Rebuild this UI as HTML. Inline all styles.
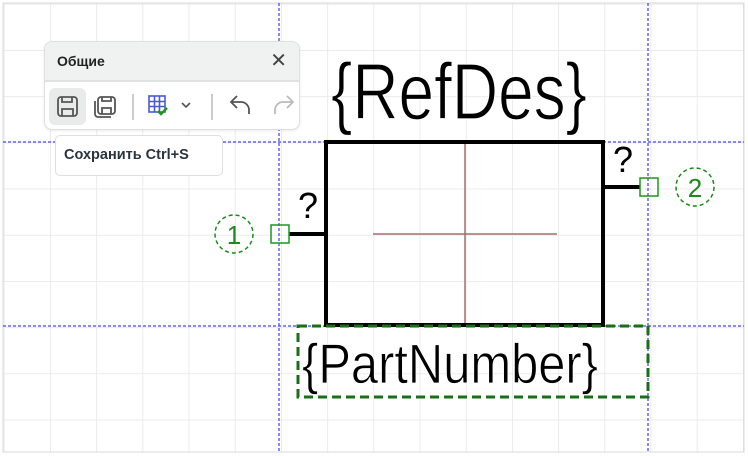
<!DOCTYPE html>
<html><head><meta charset="utf-8"><style>
html,body{margin:0;padding:0;width:748px;height:456px;overflow:hidden;background:#fff;font-family:"Liberation Sans",sans-serif}
.tb{position:absolute;left:44px;top:41px;width:254px;height:87px;border:1px solid #dde0df;border-radius:8px;background:#fff;box-shadow:0 1px 3px rgba(0,0,0,.08);overflow:hidden}
.hd{height:38px;background:#f0f2f1;border-bottom:2px solid #dfe3e2;font-weight:bold;font-size:14px;color:#222;line-height:38px;padding-left:12px;position:relative}
.tt{position:absolute;left:55px;top:135px;width:166px;height:39px;border:1px solid #dde0df;border-radius:5px;background:#fff;font-weight:bold;font-size:14.5px;color:#2a3340;line-height:39px;text-indent:8px}
</style></head><body>
<svg width="748" height="456" style="position:absolute;left:0;top:0">
<defs><pattern id="g" x="3.8" y="3.8" width="46.2" height="46.2" patternUnits="userSpaceOnUse"><path d="M0 0H46.2M0 0V46.2" stroke="#e6e6e6" stroke-width="1.5" fill="none"/></pattern></defs>
<rect x="3" y="3" width="741" height="449" fill="url(#g)" stroke="#d8d8d8"/>
<g stroke="#6060ff" stroke-width="1.5" stroke-dasharray="3 2">
<line x1="279" y1="3" x2="279" y2="452"/><line x1="648" y1="3" x2="648" y2="452"/>
<line x1="3" y1="142" x2="744" y2="142"/><line x1="3" y1="326" x2="744" y2="326"/></g>
<text x="331" y="119" font-family="Liberation Sans Narrow,Liberation Sans,sans-serif" font-size="80" textLength="256" lengthAdjust="spacingAndGlyphs" fill="#000" stroke="#fff" stroke-width="1.2">{RefDes}</text>
<line x1="373" y1="234" x2="557" y2="234" stroke="#a07070" stroke-width="1.5"/>
<line x1="465" y1="142" x2="465" y2="325" stroke="#a07070" stroke-width="1.5"/>
<rect x="326" y="142" width="277" height="183" fill="none" stroke="#000" stroke-width="4"/>
<line x1="289" y1="234" x2="326" y2="234" stroke="#000" stroke-width="4"/>
<line x1="603" y1="187" x2="640" y2="187" stroke="#000" stroke-width="4"/>
<rect x="271" y="225" width="18" height="18" fill="none" stroke="#1a9a1a" stroke-width="1.5"/>
<rect x="640" y="178" width="18" height="18" fill="none" stroke="#1a9a1a" stroke-width="1.5"/>
<circle cx="234" cy="234" r="19" fill="none" stroke="#1a8a1a" stroke-width="1.5" stroke-dasharray="4 3"/>
<circle cx="695" cy="187" r="19" fill="none" stroke="#1a8a1a" stroke-width="1.5" stroke-dasharray="4 3"/>
<text x="234" y="244" text-anchor="middle" font-size="26" fill="#1a8a1a" font-family="Liberation Sans Narrow,Liberation Sans,sans-serif">1</text>
<text x="695" y="197" text-anchor="middle" font-size="26" fill="#1a8a1a" font-family="Liberation Sans Narrow,Liberation Sans,sans-serif">2</text>
<text x="298" y="218" font-size="36" fill="#000" font-family="Liberation Sans Narrow,Liberation Sans,sans-serif">?</text>
<text x="613" y="172" font-size="36" fill="#000" font-family="Liberation Sans Narrow,Liberation Sans,sans-serif">?</text>
<rect x="298" y="326" width="350" height="71" fill="none" stroke="#1a6e1a" stroke-width="3" stroke-dasharray="9 5"/>
<text x="302" y="383" font-family="Liberation Sans Narrow,Liberation Sans,sans-serif" font-size="56" textLength="296" lengthAdjust="spacingAndGlyphs" fill="#000" stroke="#fff" stroke-width="0.8">{PartNumber}</text>
</svg>
<div class="tb"><div class="hd">Общие<span style="position:absolute;right:12px;top:0;font-weight:normal;font-size:20px;color:#444">✕</span></div>
<svg width="254" height="47" style="position:absolute;left:0;top:40px">
<rect x="4" y="6" width="37" height="37" rx="6" fill="#e8ebea"/>
<g fill="none" stroke="#555" stroke-width="1.8">
<rect x="13" y="15" width="19" height="19" rx="3"/><path d="M17 15v5h10v-5M17 34v-7h11v7"/>
<rect x="53" y="15" width="17" height="17" rx="3"/><path d="M50 19v13a3 3 0 0 0 3 3h13M57 15v4h9v-4M57 32v-6h9v6"/>
<path d="M192 26l-6-6 6-6M186 20h10a8 8 0 0 1 8 8v4"/></g>
<path d="M242 26l6-6-6-6M248 20h-10a8 8 0 0 0-8 8v4" fill="none" stroke="#bbb" stroke-width="1.8"/>
<line x1="88" y1="12" x2="88" y2="38" stroke="#bbb" stroke-width="1.5"/>
<line x1="167" y1="12" x2="167" y2="38" stroke="#bbb" stroke-width="1.5"/>
<g stroke="#4a5ad0" stroke-width="1.6" fill="none"><rect x="104" y="14" width="16" height="16"/><path d="M104 19.5h16M104 24.5h16M109.5 14v16M114.5 14v16"/></g>
<path d="M113 29l3 3 6-6" stroke="#1a9a1a" stroke-width="2.5" fill="none"/>
<path d="M137 21l4 4 4-4" stroke="#555" stroke-width="1.6" fill="none"/>
</svg></div>
<div class="tt">Сохранить Ctrl+S</div>
</body></html>
